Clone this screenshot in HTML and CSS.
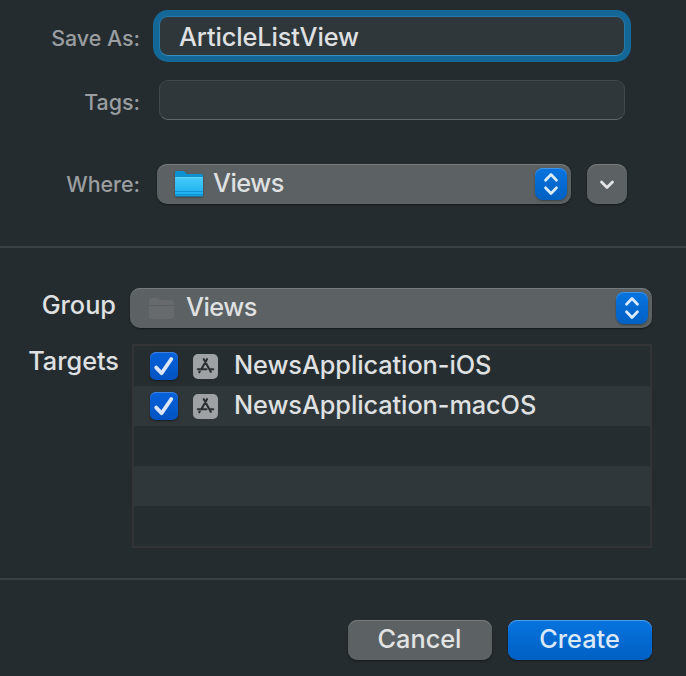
FILE: index.html
```html
<!DOCTYPE html>
<html lang="en">
<head>
<meta charset="utf-8">
<title>Save</title>
<link rel="stylesheet" href="styles.css">
</head>
<body>
<svg class="defs" width="0" height="0">
  <defs>
    <linearGradient id="folder" x1="0" y1="0" x2="0" y2="1"><stop offset="0" stop-color="#48cbfa"/><stop offset="1" stop-color="#1caeee"/></linearGradient>
    <symbol id="updown" viewBox="0 0 32 32"><path d="M10.500 12.300 16 6.500l5.500 5.800M10.500 19.700 16 25.500l5.500-5.800" fill="none" stroke="#dcebfa" stroke-width="2.700" stroke-linecap="round" stroke-linejoin="round"/></symbol>
    <symbol id="check" viewBox="0 0 28 28"><path d="M6.200 15.600 11.600 21.200 21.300 7" fill="none" stroke="#dbe7f9" stroke-width="3.800" stroke-linecap="round" stroke-linejoin="round"/></symbol>
    <symbol id="app" viewBox="0 0 25 25"><rect width="25" height="25" rx="5" fill="#9fa2a4"/><path d="M10.800 5.200 17.800 17.800M14 5.200 8.300 15.300M4.800 15.300H13.500M17 15.300H20.200M6.700 17.500 6.300 18.300" fill="none" stroke="#2a3032" stroke-width="2.100" stroke-linecap="round"/></symbol>
  </defs>
</svg>
<main class="sheet">
  <section class="save">
    <div class="line">
      <label class="label">Save As:</label>
      <div class="field focused"><span>ArticleListView</span></div>
    </div>
    <div class="line tags">
      <label class="label">Tags:</label>
      <div class="field"></div>
    </div>
    <div class="line where">
      <label class="label l-where">Where:</label>
      <div class="popup where-popup">
        <svg class="folder" width="30" height="28" viewBox="0 0 30 28"><path d="M1 2.500Q1 1 2.500 1H9q1 0 2 1l1.500 1.500Q13 4 14 4h13.500Q29 4 29 5.500V25q0 1.500-1.500 1.500h-25Q1 26.500 1 25z" fill="#0c91d2"/><path d="M1 7h28v17.500q0 1-1 1H2q-1 0-1-1z" fill="url(#folder)"/><path d="M1 21.500h28M1 24.500h28" stroke="#1096d4" stroke-width="1"/><path d="M1.500 7.500h27" stroke="#75dafb" stroke-width=".7"/></svg>
        <span>Views</span>
        <svg class="stepper" width="32" height="32"><use href="#updown"/></svg>
      </div>
      <button class="expand" aria-label="Expand"><svg width="40" height="40" viewBox="0 0 40 40"><path d="M14.500 18 20 23.500 25.500 18" fill="none" stroke="#e4e5e5" stroke-width="2.800" stroke-linecap="round" stroke-linejoin="round"/></svg></button>
    </div>
  </section>
  <section class="options">
    <div class="opt">
      <span class="title t-group">Group</span>
      <div class="popup group-popup">
        <svg class="ghost" width="25" height="21" viewBox="0 0 25 21"><path d="M0 3q0-3 3-3h5q1 0 2 1l1 1h11q3 0 3 3v13q0 3-3 3H3q-3 0-3-3z" fill="#666a6c"/><path d="M0 7.500h25" stroke="#5b5f61"/></svg>
        <span>Views</span>
        <svg class="stepper" width="32" height="32"><use href="#updown"/></svg>
      </div>
    </div>
    <div class="opt targets">
      <span class="title t-targets">Targets</span>
      <div class="table">
        <div class="row"><svg class="check" width="28" height="28"><use href="#check"/></svg><svg class="app" width="25" height="25"><use href="#app"/></svg><span>NewsApplication-iOS</span></div>
        <div class="row"><svg class="check" width="28" height="28"><use href="#check"/></svg><svg class="app" width="25" height="25"><use href="#app"/></svg><span>NewsApplication-macOS</span></div>
        <div class="row"></div>
        <div class="row"></div>
        <div class="row"></div>
      </div>
    </div>
  </section>
  <footer class="actions">
    <button class="btn">Cancel</button>
    <button class="btn primary">Create</button>
  </footer>
</main>
</body>
</html>
```
FILE: styles.css
```css
* { box-sizing: border-box; }
body {
  margin: 0;
  background: #252c2f;
  color: #dfe0e1;
  font: 450 25.3px/40px Inter, "Liberation Sans", sans-serif;
}
svg { display: block; flex: none; }
.defs { position: absolute; }
.sheet { height: 676px; overflow: hidden; white-space: nowrap; }
.save { height: 248px; padding-top: 16px; border-bottom: 2px solid #394143; }
.line { display: flex; height: 40px; }
.tags { margin-top: 24px; }
.where { margin-top: 44px; }
.label {
  width: 140px;
  padding-top: 2px;
  text-align: right;
  font-size: 21.4px;
  color: #9a9ea0;
}
.l-where { padding-top: 0; }
.field {
  width: 466px;
  height: 40px;
  margin-left: 19px;
  padding: 1px 0 0 19px;
  background: #30373a;
  border: 1px solid #42484b;
  border-bottom-color: #626769;
  border-radius: 9px;
  line-height: 38px;
  letter-spacing: -.1px;
}
.focused {
  border-color: #2878a6;
  border-bottom-color: #388dc0;
  box-shadow: 0 0 0 6px #146898;
}
.popup {
  display: flex;
  height: 40px;
  background: #5c6163;
  border-radius: 10px;
  box-shadow: inset 0 1px #777b7d, 0 1px 2px #14191b;
}
.where-popup { width: 414px; margin-left: 17px; padding: 0 4px 0 17px; }
.folder { margin: 6px 9px 0 0; filter: drop-shadow(0 1px 1px #394246); }
.popup span { line-height: 38px; letter-spacing: -.5px; }
.stepper {
  margin: 4px 0 0 auto;
  border-radius: 8px;
  background: linear-gradient(#0874df, #0060c3);
  box-shadow: inset 0 1px #3c93e8, 0 1px 2px #3b4043;
}
.expand {
  width: 40px;
  height: 40px;
  margin-left: 16px;
  padding: 0;
  border: 0;
  border-radius: 10px;
  background: #5c6163;
  box-shadow: inset 0 1px #777b7d, 0 1px 2px #14191b;
}
.options { height: 332px; padding-top: 40px; border-bottom: 2px solid #394143; }
.opt { display: flex; }
.title { width: 117px; text-align: right; line-height: 34px; }
.t-group { padding-right: 1px; }
.group-popup { width: 522px; margin-left: 13px; padding: 0 4px 0 19px; }
.ghost { margin: 10px 12px 0 0; }
.targets { margin-top: 16px; }
.t-targets { width: 119px; }
.table { width: 520px; margin-left: 13px; border: 2px solid #333435; }
.row { display: flex; height: 40px; background: #262d30; }
.row:nth-child(even) { background: #30373a; }
.check {
  margin: 6px 15px 0 16px;
  border-radius: 6px;
  background: linear-gradient(#0861db, #0053c1);
  box-shadow: inset 0 1px #3b82e0, 0 1px 2px #171c20;
}
.app { margin: 8px 16px 0 0; }
.row span { line-height: 38px; letter-spacing: -.07px; }
.actions { display: flex; gap: 16px; padding: 40px 0 0 348px; }
.btn {
  width: 144px;
  height: 40px;
  padding: 0 1px 2px 0;
  border: 0;
  border-radius: 9px;
  background: #5c6163;
  color: #e2e3e3;
  font: inherit;
  line-height: 38px;
  box-shadow: inset 0 1px #777b7d, 0 1px 2px #14191b;
}
.primary {
  background: linear-gradient(#0874df, #0060c3);
  color: #d9e9fa;
  box-shadow: inset 0 1px #4c9dec, 0 1px 2px #14191b;
}
```
